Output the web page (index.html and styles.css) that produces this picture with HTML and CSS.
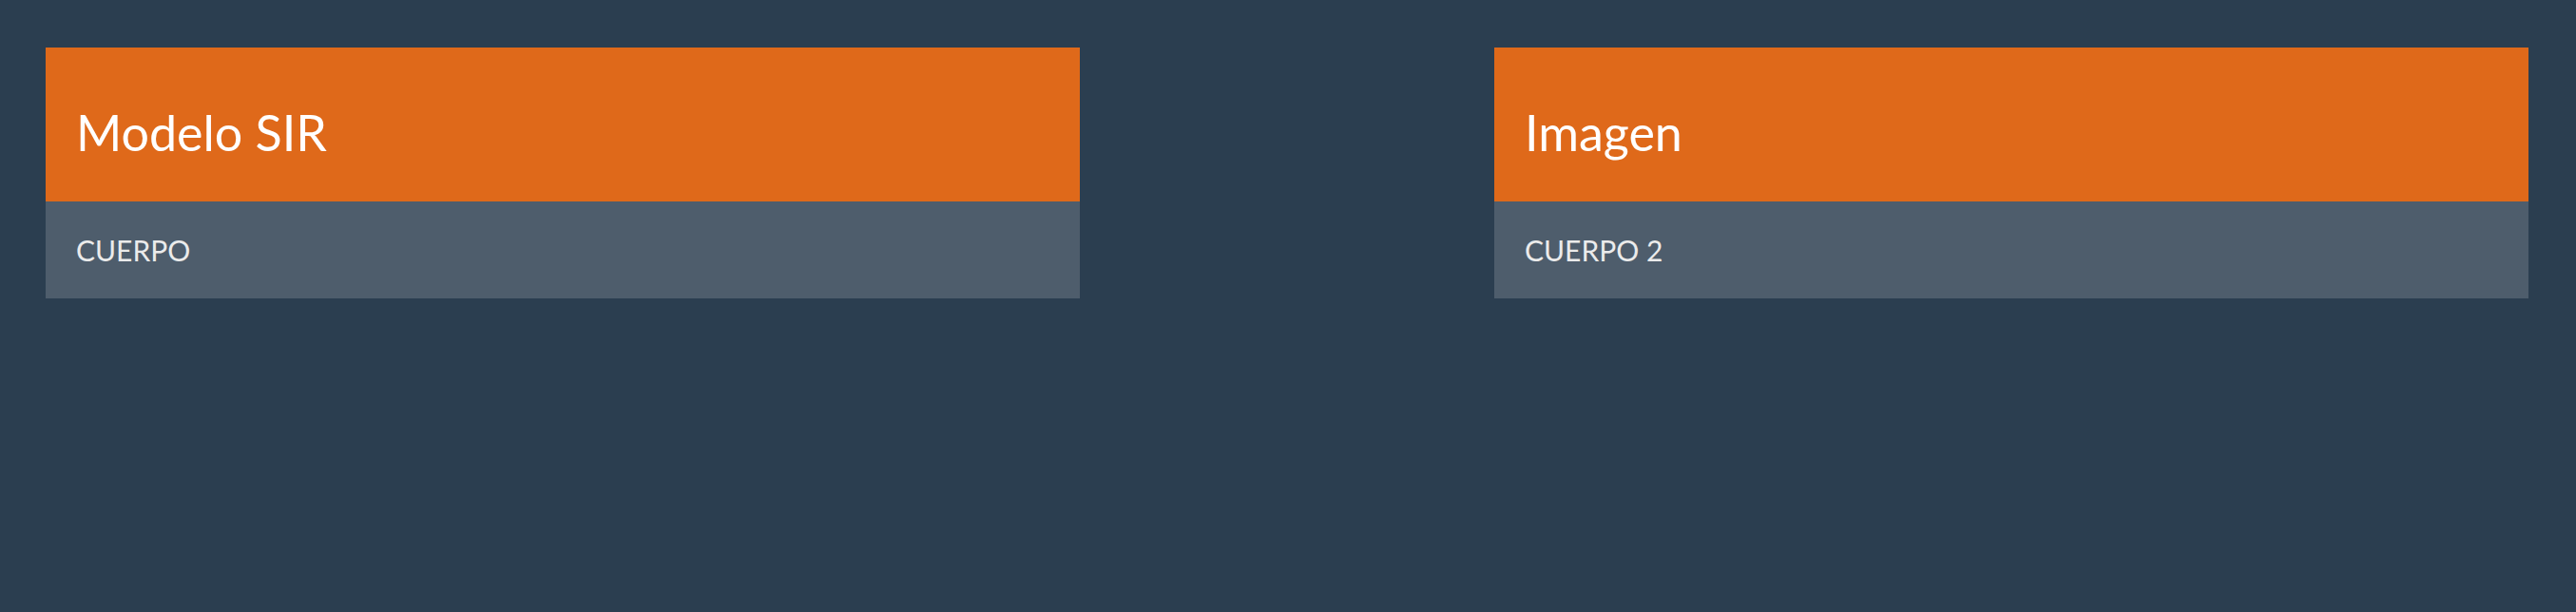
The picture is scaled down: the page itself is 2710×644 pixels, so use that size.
FILE: index.html
```html
<!DOCTYPE html>
<html lang="es">
<head>
<meta charset="utf-8">
<title>Paneles</title>
<link rel="stylesheet" href="styles.css">
</head>
<body>
<div class="row">
  <section class="panel">
    <header class="panel-heading"><h3 class="panel-title">Modelo SIR</h3></header>
    <div class="panel-body">CUERPO</div>
  </section>
  <section class="panel">
    <header class="panel-heading"><h3 class="panel-title">Imagen</h3></header>
    <div class="panel-body">CUERPO 2</div>
  </section>
</div>
</body>
</html>
```

FILE: styles.css
```css
html, body {
  margin: 0;
  padding: 0;
  background: #2b3e50;
  height: 100%;
}
body {
  font-family: Lato, "Noto Sans", sans-serif;
  color: #ebebeb;
}
.row {
  display: flex;
  justify-content: space-between;
  padding: 50px 50px 0 48px;
}
.panel {
  width: 1088px;
  background: #4e5d6c;
}
.panel-heading {
  background: #df691a;
  height: 162px;
  display: flex;
  align-items: center;
  padding: 0 32px;
}
.panel-title {
  margin: 0;
  font-size: 52px;
  font-weight: 400;
  color: #fff;
  line-height: 1.1;
  padding-top: 18px;
}
.panel-body {
  height: 102px;
  box-sizing: border-box;
  padding: 0 32px;
  font-size: 30px;
  line-height: 102px;
  color: #ebebeb;
}
```
